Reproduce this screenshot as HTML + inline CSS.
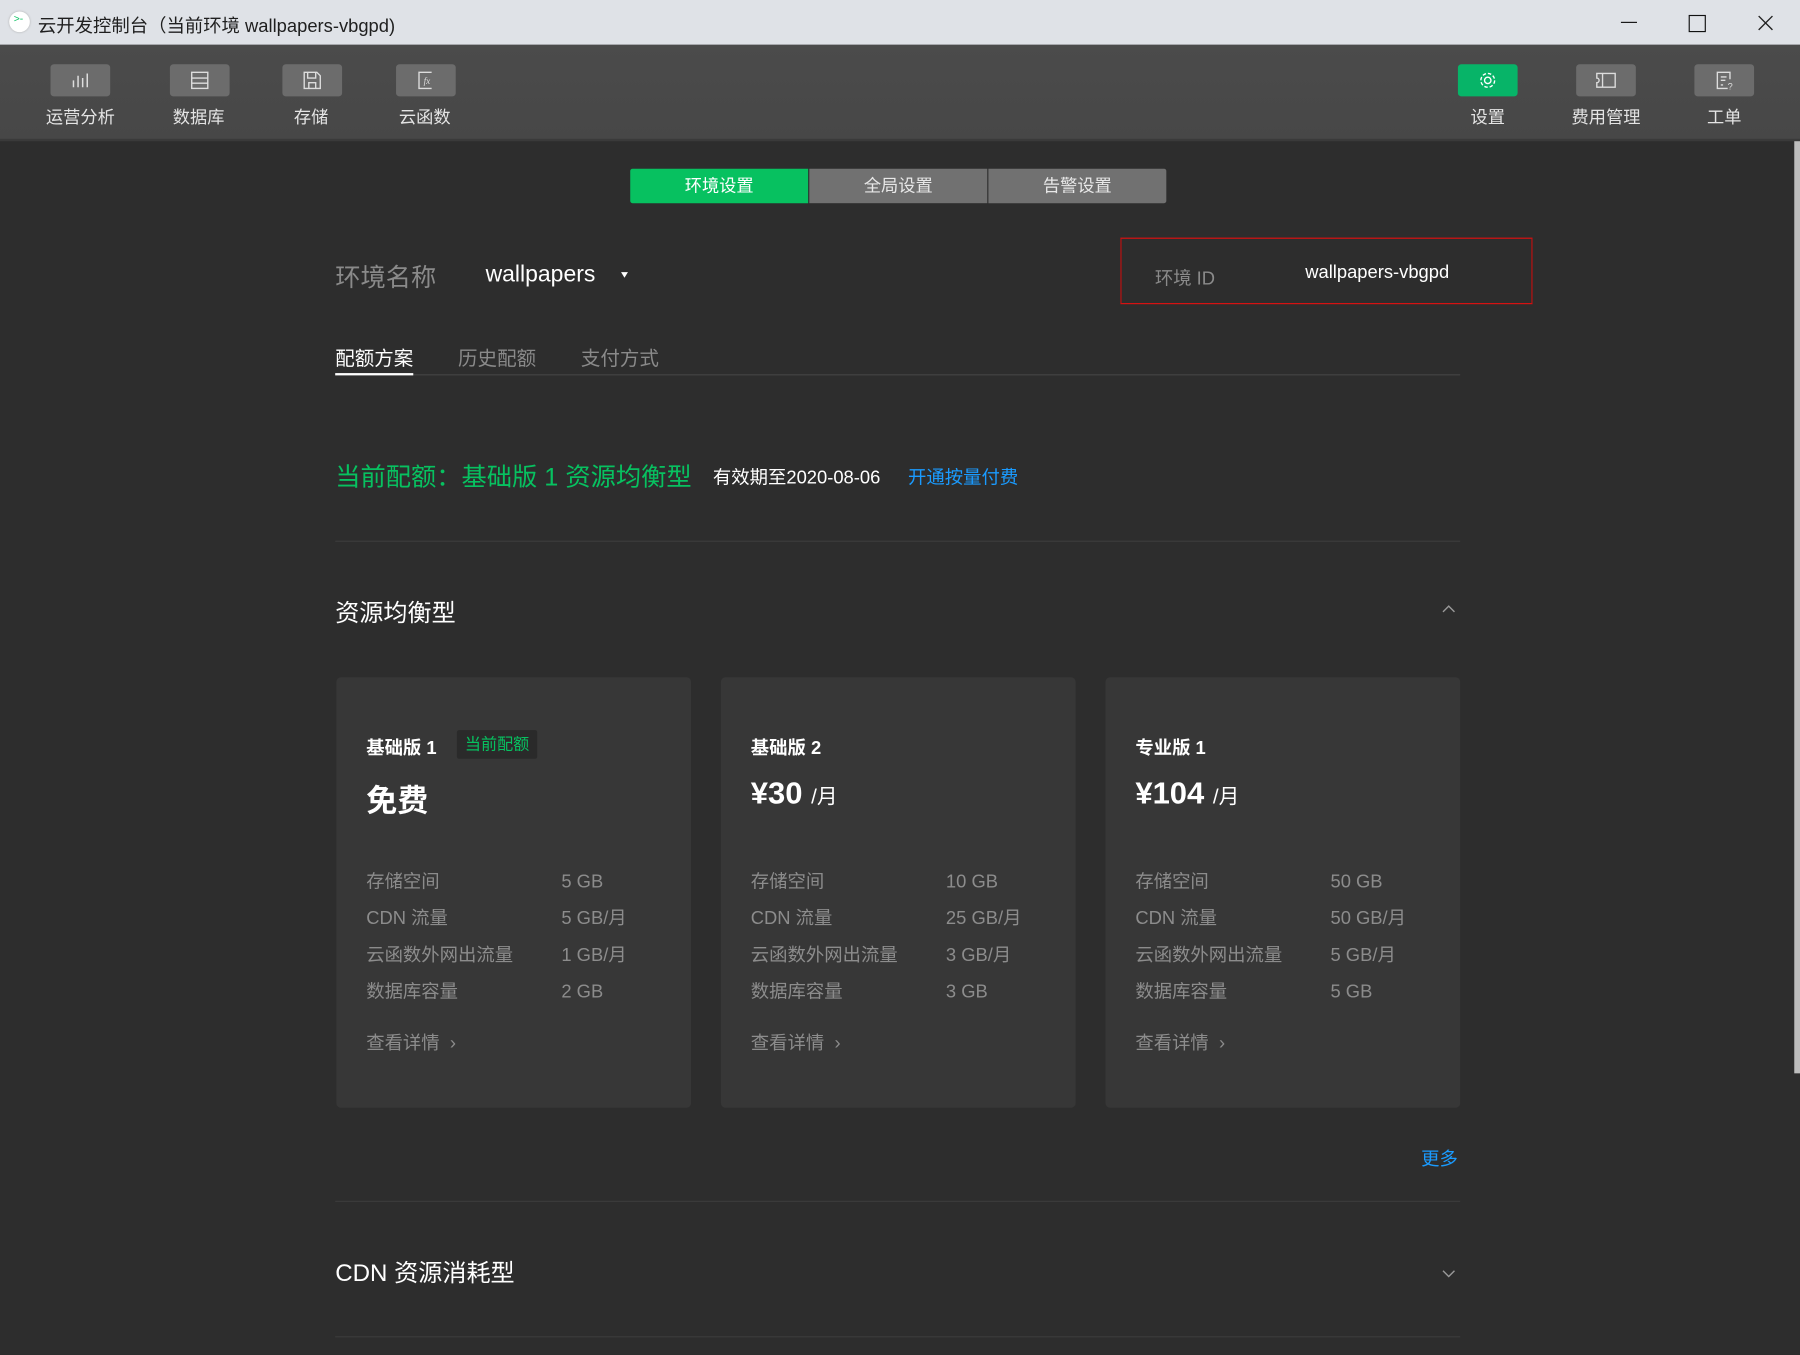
<!DOCTYPE html>
<html><head><meta charset="utf-8">
<style>
html,body{margin:0;padding:0;width:1800px;height:1354px;overflow:hidden;background:#2d2d2d;}
#w{position:absolute;left:0;top:0;width:1568px;height:1180px;transform:scale(1.14796);transform-origin:0 0;font-family:"Liberation Sans","Noto Sans CJK SC",sans-serif;background:#2d2d2d;}
.a{position:absolute;white-space:nowrap;}
.tb{position:absolute;top:0;left:0;width:1568px;height:39px;background:#dfe2e7;}
.tool{position:absolute;top:39px;left:0;width:1568px;height:82px;background:linear-gradient(#4b4b4b,#474747);border-bottom:2px solid #3a3a3a;}
.btn{position:absolute;top:17px;width:52px;height:28px;border-radius:3px;background:#6c6c6c;}
.btn svg{position:absolute;left:16px;top:4px;}
.lbl{position:absolute;top:52px;font-size:15px;color:#e4e4e4;transform:translateX(-50%);white-space:nowrap;}
.seg{position:absolute;top:147px;height:30px;width:155px;background:#717171;color:#e8e8e8;font-size:15px;text-align:center;line-height:31px;}
.card{position:absolute;top:590px;width:309px;height:375px;background:#373737;border-radius:4px;}
.card .t{position:absolute;left:26px;top:48px;font-size:16px;font-weight:bold;color:#fff;white-space:nowrap;}
.card .bd{position:absolute;left:105px;top:46px;width:70px;height:25px;background:#2a2a2a;border-radius:2px;color:#07c160;font-size:14px;text-align:center;line-height:25px;white-space:nowrap;}
.card .p{position:absolute;left:26px;top:86px;font-size:27px;font-weight:bold;color:#fff;white-space:nowrap;}
.card .p small{font-size:18px;font-weight:normal;}
.row{position:absolute;left:26px;width:260px;height:20px;font-size:16px;line-height:20px;color:#8c8c8c;white-space:nowrap;}
.row span{position:absolute;left:170px;top:0;line-height:20px;white-space:nowrap;}
.more{position:absolute;left:26px;top:305px;font-size:16px;color:#8c8c8c;white-space:nowrap;}
.hr{position:absolute;left:292px;width:980px;height:1px;background:#3c3c3c;}
</style></head><body><div id="w">
<div class="tb">
 <div class="a" style="left:8px;top:10px;width:18px;height:18px;border-radius:50%;background:#fff;box-shadow:0 0 2px #aaa;"><span style="position:absolute;left:4px;top:1px;font-size:9px;color:#07c160;">&gt;-</span></div>
 <div class="a" style="left:33px;top:9px;font-size:16px;color:#1f1f1f;">云开发控制台（当前环境 wallpapers-vbgpd)</div>
 <div class="a" style="left:1412px;top:19px;width:14px;height:1px;background:#111;"></div>
 <div class="a" style="left:1471px;top:13px;width:13px;height:13px;border:1px solid #111;"></div>
 <svg class="a" style="left:1531px;top:13px" width="14" height="14"><path d="M1 1L13 13M13 1L1 13" stroke="#222" stroke-width="1.2"/></svg>
</div>
<div class="tool">
 <div class="btn" style="left:44px"><svg width="20" height="20"><path d="M4 16V10M8 16V6M12 16V8M16 16V4" stroke="#ddd" stroke-width="1.3"/></svg></div>
 <div class="lbl" style="left:70px">运营分析</div>
 <div class="btn" style="left:148px"><svg width="20" height="20"><rect x="3" y="3" width="14" height="14" fill="none" stroke="#ddd" stroke-width="1.2"/><path d="M3 8H17M3 12.5H17" stroke="#ddd" stroke-width="1.2"/></svg></div>
 <div class="lbl" style="left:173px">数据库</div>
 <div class="btn" style="left:246px"><svg width="20" height="20"><path d="M3 3H14L17 6V17H3Z M6 3V8H13V3 M7 17V12H13V17" fill="none" stroke="#ddd" stroke-width="1.2"/></svg></div>
 <div class="lbl" style="left:271px">存储</div>
 <div class="btn" style="left:345px"><svg width="20" height="20"><path d="M15 3H4V17H15" fill="none" stroke="#ddd" stroke-width="1.2"/><text x="8" y="13" font-size="8" font-style="italic" fill="#ddd" font-family="Liberation Serif">fx</text></svg></div>
 <div class="lbl" style="left:370px">云函数</div>
 <div class="btn" style="left:1270px;background:#07b468"><svg width="20" height="20"><circle cx="10" cy="10" r="2.8" fill="none" stroke="#fff" stroke-width="1.2"/><circle cx="10" cy="10" r="6" fill="none" stroke="#fff" stroke-width="1.2" stroke-dasharray="3 1.7"/></svg></div>
 <div class="lbl" style="left:1296px">设置</div>
 <div class="btn" style="left:1373px"><svg width="20" height="20"><path d="M2 4H18V16H2V12A2 2 0 0 0 2 8Z M7 4V16" fill="none" stroke="#ddd" stroke-width="1.2"/></svg></div>
 <div class="lbl" style="left:1399px">费用管理</div>
 <div class="btn" style="left:1476px"><svg width="20" height="20"><path d="M13 17H4V3H15V9 M7 7H12M7 10H11M7 14H9" fill="none" stroke="#ddd" stroke-width="1.2"/><text x="13" y="18" font-size="8" fill="#ddd">?</text></svg></div>
 <div class="lbl" style="left:1502px">工单</div>
</div>
<div class="a" style="left:1563px;top:123px;width:5px;height:812px;background:#bdbdbd;"></div>

<div class="seg" style="left:549px;background:#07c160;color:#fff;border-radius:2px 0 0 2px;">环境设置</div>
<div class="seg" style="left:705px;">全局设置</div>
<div class="seg" style="left:861px;width:155px;border-radius:0 2px 2px 0;">告警设置</div>

<div class="a" style="left:292px;top:224px;font-size:22px;color:#8a8a8a;">环境名称</div>
<div class="a" style="left:423px;top:228px;font-size:20px;color:#fff;">wallpapers</div>
<div class="a" style="left:541px;top:237px;width:0;height:0;border-left:3px solid transparent;border-right:3px solid transparent;border-top:5px solid #fff;"></div>
<div class="a" style="left:976px;top:207px;width:357px;height:56px;border:1px solid #c01010;border-top-color:#e01010;border-bottom-color:#e01010;"></div>
<div class="a" style="left:1006px;top:229px;font-size:16px;color:#8a8a8a;">环境 ID</div>
<div class="a" style="left:1137px;top:229px;font-size:16px;color:#fff;">wallpapers-vbgpd</div>

<div class="a" style="left:292px;top:298px;font-size:17px;color:#fff;">配额方案</div>
<div class="a" style="left:399px;top:298px;font-size:17px;color:#8a8a8a;">历史配额</div>
<div class="a" style="left:506px;top:298px;font-size:17px;color:#8a8a8a;">支付方式</div>
<div class="hr" style="top:326px;background:#444;"></div>
<div class="a" style="left:292px;top:325px;width:68px;height:2px;background:#fff;"></div>

<div class="a" style="left:292px;top:398px;font-size:22px;color:#07c160;">当前配额：基础版 1 资源均衡型</div>
<div class="a" style="left:621px;top:402px;font-size:16px;color:#fff;">有效期至2020-08-06</div>
<div class="a" style="left:791px;top:402px;font-size:16px;color:#1a9bff;">开通按量付费</div>
<div class="hr" style="top:471px;"></div>

<div class="a" style="left:292px;top:518px;font-size:21px;color:#fff;">资源均衡型</div>
<svg class="a" style="left:1256px;top:527px" width="12" height="8"><path d="M1 6L6 1L11 6" fill="none" stroke="#999" stroke-width="1.2"/></svg>

<div class="card" style="left:293px">
 <div class="t">基础版 1</div>
 <div class="bd">当前配额</div>
 <div class="p">免费</div>
 <div class="row" style="top:169px">存储空间<span>5 GB</span></div>
 <div class="row" style="top:201px">CDN 流量<span>5 GB/月</span></div>
 <div class="row" style="top:233px">云函数外网出流量<span>1 GB/月</span></div>
 <div class="row" style="top:265px">数据库容量<span>2 GB</span></div>
 <div class="more">查看详情 &nbsp;›</div>
</div>
<div class="card" style="left:628px">
 <div class="t">基础版 2</div>
 <div class="p">¥30 <small>/月</small></div>
 <div class="row" style="top:169px">存储空间<span>10 GB</span></div>
 <div class="row" style="top:201px">CDN 流量<span>25 GB/月</span></div>
 <div class="row" style="top:233px">云函数外网出流量<span>3 GB/月</span></div>
 <div class="row" style="top:265px">数据库容量<span>3 GB</span></div>
 <div class="more">查看详情 &nbsp;›</div>
</div>
<div class="card" style="left:963px">
 <div class="t">专业版 1</div>
 <div class="p">¥104 <small>/月</small></div>
 <div class="row" style="top:169px">存储空间<span>50 GB</span></div>
 <div class="row" style="top:201px">CDN 流量<span>50 GB/月</span></div>
 <div class="row" style="top:233px">云函数外网出流量<span>5 GB/月</span></div>
 <div class="row" style="top:265px">数据库容量<span>5 GB</span></div>
 <div class="more">查看详情 &nbsp;›</div>
</div>

<div class="a" style="left:1238px;top:996px;font-size:16px;color:#1a9bff;">更多</div>
<div class="hr" style="top:1046px;"></div>
<div class="a" style="left:292px;top:1093px;font-size:21px;color:#fff;">CDN 资源消耗型</div>
<svg class="a" style="left:1256px;top:1106px" width="12" height="8"><path d="M1 1L6 6L11 1" fill="none" stroke="#999" stroke-width="1.2"/></svg>
<div class="hr" style="top:1164px;"></div>
</div></body></html>
